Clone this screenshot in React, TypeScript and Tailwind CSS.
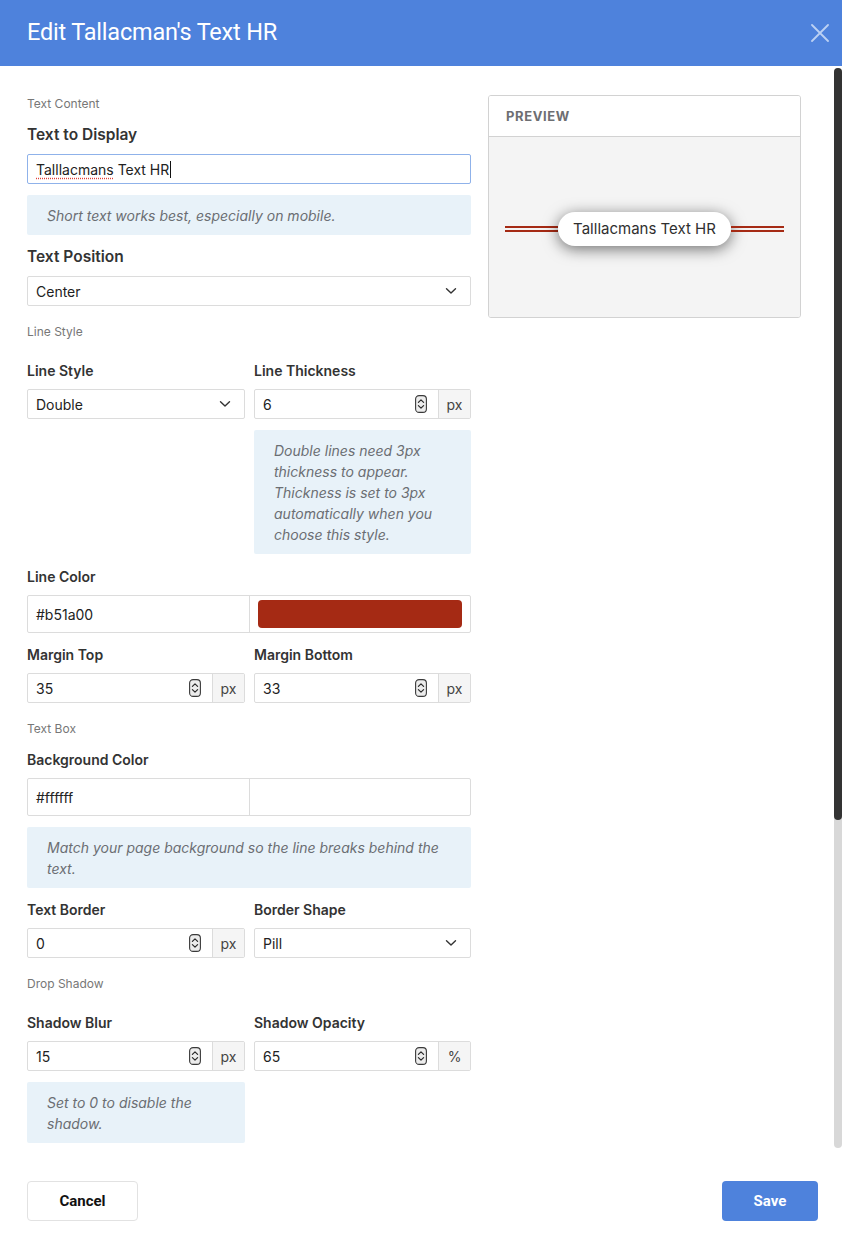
import React from "react";

const BLUE = "#4e82dc";

function SectionLabel({ children, className = "" }: { children: React.ReactNode; className?: string }) {
  return <div className={`text-[12px] leading-4 text-[#777] ${className}`}>{children}</div>;
}

function FieldLabel({ children, big = false }: { children: React.ReactNode; big?: boolean }) {
  return (
    <div className={`${big ? "text-[15.5px]" : "text-[14px]"} leading-5 font-semibold text-[#333]`}>
      {children}
    </div>
  );
}

function Help({ children }: { children: React.ReactNode }) {
  return (
    <div className="bg-[#e8f2f9] rounded-[2px] px-[20px] pt-[10px] pb-[9px] text-[14px] leading-[21px] italic text-[#6b6e73]">
      {children}
    </div>
  );
}

function Chevron() {
  return (
    <svg width="12" height="8" viewBox="0 0 12 8" fill="none" className="shrink-0">
      <path d="M1.5 1.8 L6 6 L10.5 1.8" stroke="#333" strokeWidth="1.4" strokeLinecap="round" strokeLinejoin="round" />
    </svg>
  );
}

function SpinIcon() {
  return (
    <svg width="12" height="18" viewBox="0 0 12 18" fill="none" className="shrink-0">
      <rect x="0.6" y="0.6" width="10.8" height="16.8" rx="3.5" fill="#ececec" stroke="#3a3a3a" strokeWidth="1.1" />
      <path d="M3.4 7.4 L6 4.8 L8.6 7.4" stroke="#2a2a2a" strokeWidth="1.2" strokeLinecap="round" strokeLinejoin="round" />
      <path d="M3.4 10.6 L6 13.2 L8.6 10.6" stroke="#2a2a2a" strokeWidth="1.2" strokeLinecap="round" strokeLinejoin="round" />
    </svg>
  );
}

function SelectBox({ value }: { value: string }) {
  return (
    <div className="h-[30px] flex items-center justify-between border border-[#dcdcdc] rounded-[2px] bg-white pl-[8px] pr-[13px] text-[14px] text-[#222]">
      <span>{value}</span>
      <Chevron />
    </div>
  );
}

function NumberField({ value, unit }: { value: string; unit: string }) {
  return (
    <div className="h-[30px] flex border border-[#dcdcdc] rounded-[2px] bg-white text-[14px]">
      <div className="flex-1 flex items-center pl-[8px] pr-[11px] text-[#222]">
        <span className="flex-1">{value}</span>
        <SpinIcon />
      </div>
      <div className="w-[32px] flex items-center justify-center bg-[#f5f5f5] border-l border-[#dcdcdc] text-[#444]">
        {unit}
      </div>
    </div>
  );
}

function ColorField({ value, swatch }: { value: string; swatch?: boolean }) {
  return (
    <div className="h-[38px] flex border border-[#dcdcdc] rounded-[2px] bg-white text-[14px] text-[#222]">
      <div className="w-[222px] flex items-center pl-[8px] border-r border-[#dcdcdc]">{value}</div>
      <div className="flex-1 px-[8px] py-[4px] flex">
        {swatch ? <div className="flex-1 rounded-[4px] bg-[#a52a14]" /> : null}
      </div>
    </div>
  );
}

function Row({ children, className = "" }: { children: React.ReactNode; className?: string }) {
  return <div className={`grid grid-cols-[218px_217px] gap-x-[9px] ${className}`}>{children}</div>;
}

function Preview() {
  return (
    <div className="w-[313px] border border-[#d2d2d2] rounded-[3px] overflow-hidden">
      <div className="h-[41px] flex items-center px-[17px] pt-[1px] bg-white border-b border-[#d2d2d2] text-[13px] font-bold tracking-[0.6px] text-[#6d6e72]">
        PREVIEW
      </div>
      <div className="h-[180px] bg-[#f4f4f4] flex items-center px-[16px] pt-[4px]">
        <div className="flex-1 h-[6px] border-y-2 border-[#a52a14]" />
        <div className="h-[34px] px-[15px] flex items-center rounded-full bg-white text-[15px] text-[#2f2f2f] shadow-[0_3px_15px_rgba(0,0,0,0.55)]">
          Talllacmans Text HR
        </div>
        <div className="flex-1 h-[6px] border-y-2 border-[#a52a14]" />
      </div>
    </div>
  );
}

export default function App() {
  return (
    <div
      className="w-[842px] h-[1243px] flex flex-col bg-white overflow-hidden"
      style={{ fontFamily: "Inter, 'Noto Sans', sans-serif" }}
    >
      <div className="h-[66px] shrink-0 flex items-center justify-between pl-[27px] pr-[13px]" style={{ background: BLUE }}>
        <h1 className="text-[23.5px] font-normal text-white tracking-[-0.2px]" style={{ fontFamily: "Roboto, 'Liberation Sans', sans-serif" }}>
          Edit Tallacman's Text HR
        </h1>
        <svg width="18" height="18" viewBox="0 0 18 18" fill="none">
          <path d="M1 1 L17 17 M17 1 L1 17" stroke="#bcd1f3" strokeWidth="1.8" strokeLinecap="round" />
        </svg>
      </div>

      <div className="h-[1084px] shrink-0 flex">
        <div className="flex-1 flex items-start pl-[27px] pt-[30px]">
          <div className="w-[444px] flex flex-col">
            <SectionLabel>Text Content</SectionLabel>
            <div className="mt-[13px]"><FieldLabel big>Text to Display</FieldLabel></div>
            <div className="mt-[9px] h-[30px] flex items-center border border-[#8fb2ea] rounded-[2px] pl-[8px] text-[14px] text-[#222]">
              <span className="underline decoration-dotted decoration-[#e0403a] underline-offset-[3px]">Talllacmans</span>
              <span>&nbsp;Text HR</span>
              <span className="w-[1px] h-[17px] bg-[#111] ml-[1px]" />
            </div>
            <div className="mt-[11px]"><Help>Short text works best, especially on mobile.</Help></div>
            <div className="mt-[12px]"><FieldLabel big>Text Position</FieldLabel></div>
            <div className="mt-[9px]"><SelectBox value="Center" /></div>

            <SectionLabel className="mt-[18px]">Line Style</SectionLabel>
            <Row className="mt-[21px]">
              <FieldLabel>Line Style</FieldLabel>
              <FieldLabel>Line Thickness</FieldLabel>
            </Row>
            <Row className="mt-[8px]">
              <SelectBox value="Double" />
              <div className="flex flex-col gap-[11px]">
                <NumberField value="6" unit="px" />
                <Help>
                  Double lines need 3px thickness to appear. Thickness is set to 3px automatically when you choose this style.
                </Help>
              </div>
            </Row>

            <div className="mt-[13px]"><FieldLabel>Line Color</FieldLabel></div>
            <div className="mt-[8px]"><ColorField value="#b51a00" swatch /></div>

            <Row className="mt-[12px]">
              <FieldLabel>Margin Top</FieldLabel>
              <FieldLabel>Margin Bottom</FieldLabel>
            </Row>
            <Row className="mt-[8px]">
              <NumberField value="35" unit="px" />
              <NumberField value="33" unit="px" />
            </Row>

            <SectionLabel className="mt-[18px]">Text Box</SectionLabel>
            <div className="mt-[13px]"><FieldLabel>Background Color</FieldLabel></div>
            <div className="mt-[8px]"><ColorField value="#ffffff" /></div>
            <div className="mt-[11px]"><Help>Match your page background so the line breaks behind the text.</Help></div>

            <Row className="mt-[12px]">
              <FieldLabel>Text Border</FieldLabel>
              <FieldLabel>Border Shape</FieldLabel>
            </Row>
            <Row className="mt-[8px]">
              <NumberField value="0" unit="px" />
              <SelectBox value="Pill" />
            </Row>

            <SectionLabel className="mt-[18px]">Drop Shadow</SectionLabel>
            <Row className="mt-[21px]">
              <FieldLabel>Shadow Blur</FieldLabel>
              <FieldLabel>Shadow Opacity</FieldLabel>
            </Row>
            <Row className="mt-[8px]">
              <NumberField value="15" unit="px" />
              <NumberField value="65" unit="%" />
            </Row>
            <Row className="mt-[11px]">
              <Help>Set to 0 to disable the shadow.</Help>
              <div />
            </Row>
          </div>

          <div className="ml-[17px] -mt-[1px]">
            <Preview />
          </div>
        </div>

        {/* scrollbar */}
        <div className="w-[8px] shrink-0 mt-[2px] h-[1080px] rounded-full bg-[#d8d8d8] flex flex-col">
          <div className="h-[752px] rounded-full bg-[#333]" />
        </div>
      </div>

      <div className="flex-1 flex items-start justify-between pt-[31px] pl-[27px] pr-[24px]" style={{ fontFamily: "Roboto, 'Liberation Sans', sans-serif" }}>
        <button className="w-[111px] h-[40px] border border-[#e2e2e2] rounded-[4px] bg-white text-[15px] font-bold text-[#111]">
          Cancel
        </button>
        <button className="w-[96px] h-[40px] rounded-[4px] text-[15px] font-bold text-white" style={{ background: BLUE }}>
          Save
        </button>
      </div>
    </div>
  );
}
